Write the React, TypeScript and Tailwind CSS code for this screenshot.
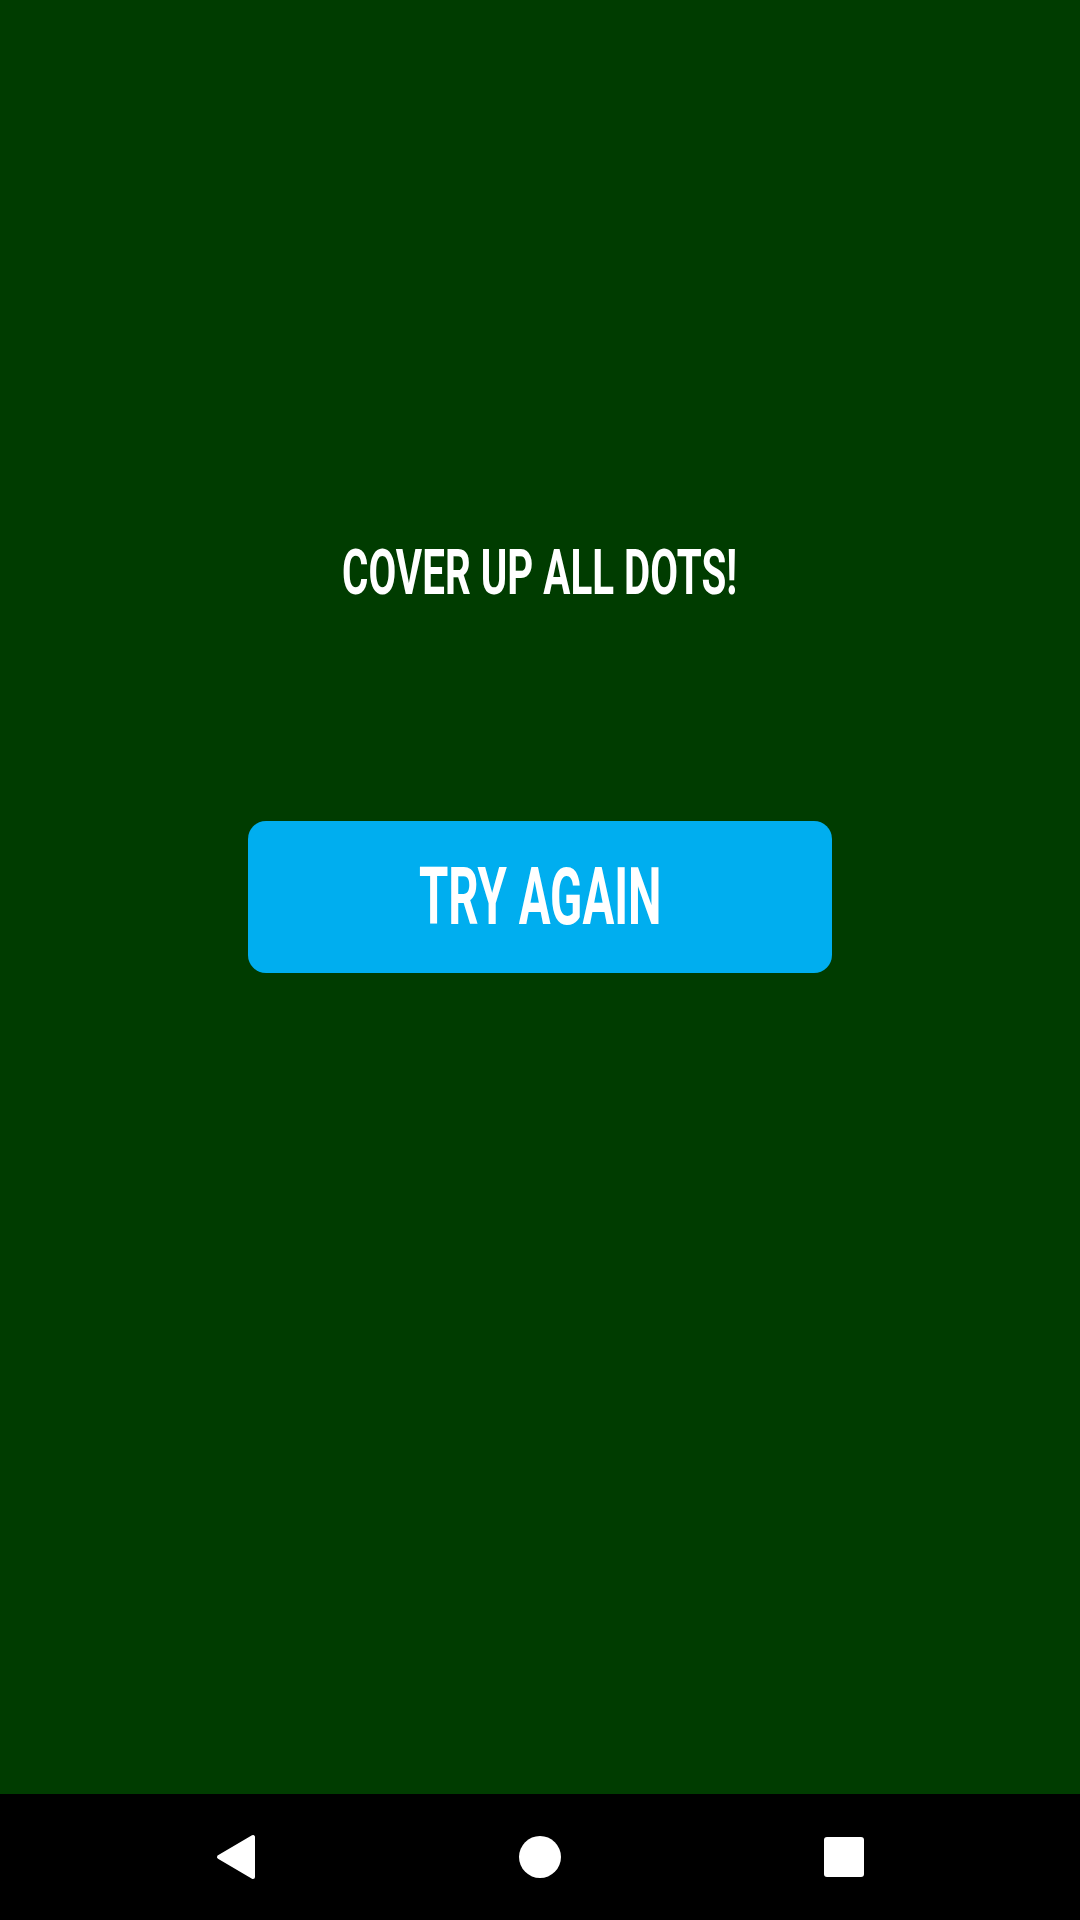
import React from "react";

export default function App() {
  return (
    <div className="w-[1080px] h-[1920px] flex flex-col bg-[#003c00]" style={{ fontFamily: "Roboto, 'Liberation Sans', sans-serif" }}>
      <div className="h-[1794px] flex flex-col items-center pt-[541px]">
        <div className="h-[63px] flex items-center justify-center">
          <span className="text-[63px] leading-none font-bold text-white whitespace-nowrap scale-x-[0.64] inline-block">
            COVER UP ALL DOTS!
          </span>
        </div>
        <button className="mt-[217px] w-[584px] h-[152px] rounded-[18px] bg-[#00aeef] flex items-center justify-center">
          <span className="text-[79px] leading-none font-bold text-white whitespace-nowrap scale-x-[0.6] inline-block">
            TRY AGAIN
          </span>
        </button>
      </div>
      <div className="h-[126px] bg-black flex items-center justify-center">
        <div className="grid grid-cols-3 w-[912px]">
          <div className="flex items-center justify-center">
            <svg width="40" height="46" viewBox="0 0 40 46">
              <polygon points="37,3 37,43 3,23" fill="white" stroke="white" strokeWidth="4" strokeLinejoin="round" />
            </svg>
          </div>
          <div className="flex items-center justify-center">
            <div className="w-[42px] h-[42px] rounded-full bg-white" />
          </div>
          <div className="flex items-center justify-center">
            <div className="w-[40px] h-[40px] rounded-[3px] bg-white" />
          </div>
        </div>
      </div>
    </div>
  );
}
